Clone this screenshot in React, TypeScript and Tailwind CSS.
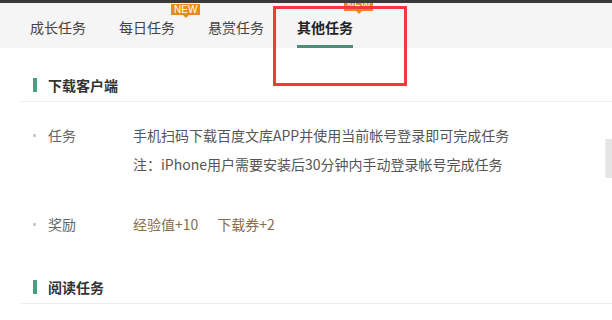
import React from "react"

const tabs = [
    { name: "成长任务", badge: null },
    { name: "每日任务", badge: "normal" },
    { name: "悬赏任务", badge: null },
    { name: "其他任务", badge: "clipped", active: true },
]

function NewBadge({ className }: { className: string }) {
    return (
        <div className={`absolute flex flex-col items-center ${className}`}>
            <div className="bg-[#ea8a1c] text-white text-[10px] leading-[11px] px-[3px] font-['Liberation_Sans',sans-serif]">
                NEW
            </div>
            <div className="w-0 h-0 border-l-[3px] border-r-[3px] border-t-[3px] border-l-transparent border-r-transparent border-t-[#ea8a1c]" />
        </div>
    )
}

function SectionTitle({ title }: { title: string }) {
    return (
        <div className="ml-[20px] border-b border-[#eeeeee] h-[54px] flex items-end pb-[8px] pl-[13px]">
            <span className="w-[4px] h-[14px] bg-[#46a083] mr-[11px] mb-[1px]" />
            <span className="text-[14px] leading-[16px] font-bold text-[#333]">{title}</span>
        </div>
    )
}

export default function App() {
    return (
        <div className="relative w-[612px] h-[320px] overflow-hidden bg-white font-['Noto_Sans_CJK_SC',sans-serif]">
            {/* tab bar */}
            <div className="relative h-[48px] bg-[#f5f5f5]">
                <div className="flex gap-[33px] pl-[30px] pt-[6px] h-full">
                    {tabs.map((t) => (
                        <div key={t.name} className="relative flex items-center h-full">
                            <span className={`text-[14px] ${t.active ? "font-bold text-[#222]" : "text-[#444]"}`}>{t.name}</span>
                            {t.active && <div className="absolute left-0 right-0 bottom-0 h-[3px] bg-[#4b8e7c]" />}
                            {t.badge === "normal" && <NewBadge className="left-[52px] top-[-2px]" />}
                            {t.badge === "clipped" && <NewBadge className="left-[47px] top-[-6px]" />}
                        </div>
                    ))}
                </div>
                <div className="absolute top-0 left-0 right-0 h-[3px] bg-[#3a3a3a]" />
            </div>

            {/* content */}
            <div>
                <SectionTitle title="下载客户端" />
                <div className="pt-[19px] text-[14px]">
                    <div className="flex leading-[29px]">
                        <div className="w-[133px] flex items-start pl-[33px]">
                            <span className="w-[3px] h-[3px] bg-[#cccccc] mt-[13px] mr-[12px]" />
                            <span className="text-[#666]">任务</span>
                        </div>
                        <div className="text-[#555]">
                            <div>手机扫码下载百度文库APP并使用当前帐号登录即可完成任务</div>
                            <div>注：iPhone用户需要安装后30分钟内手动登录帐号完成任务</div>
                        </div>
                    </div>
                    <div className="flex leading-[29px] mt-[31px]">
                        <div className="w-[133px] flex items-start pl-[33px]">
                            <span className="w-[3px] h-[3px] bg-[#cccccc] mt-[13px] mr-[12px]" />
                            <span className="text-[#666]">奖励</span>
                        </div>
                        <div className="flex gap-[19px] text-[#8b6b4d]">
                            <span>经验值+10</span>
                            <span>下载券+2</span>
                        </div>
                    </div>
                </div>
                <div className="mt-[11px]">
                    <SectionTitle title="阅读任务" />
                </div>
            </div>

            {/* scroll handle at right edge */}
            <div className="absolute left-[605px] top-[139px] w-[7px] h-[39px] bg-[#e5e5e5] border-l border-[#f0f0f0]" />

            {/* red annotation box */}
            <div className="absolute left-[273px] top-[6px] w-[134px] h-[80px] border-[3px] border-[#f23a3a]" />
        </div>
    )
}
